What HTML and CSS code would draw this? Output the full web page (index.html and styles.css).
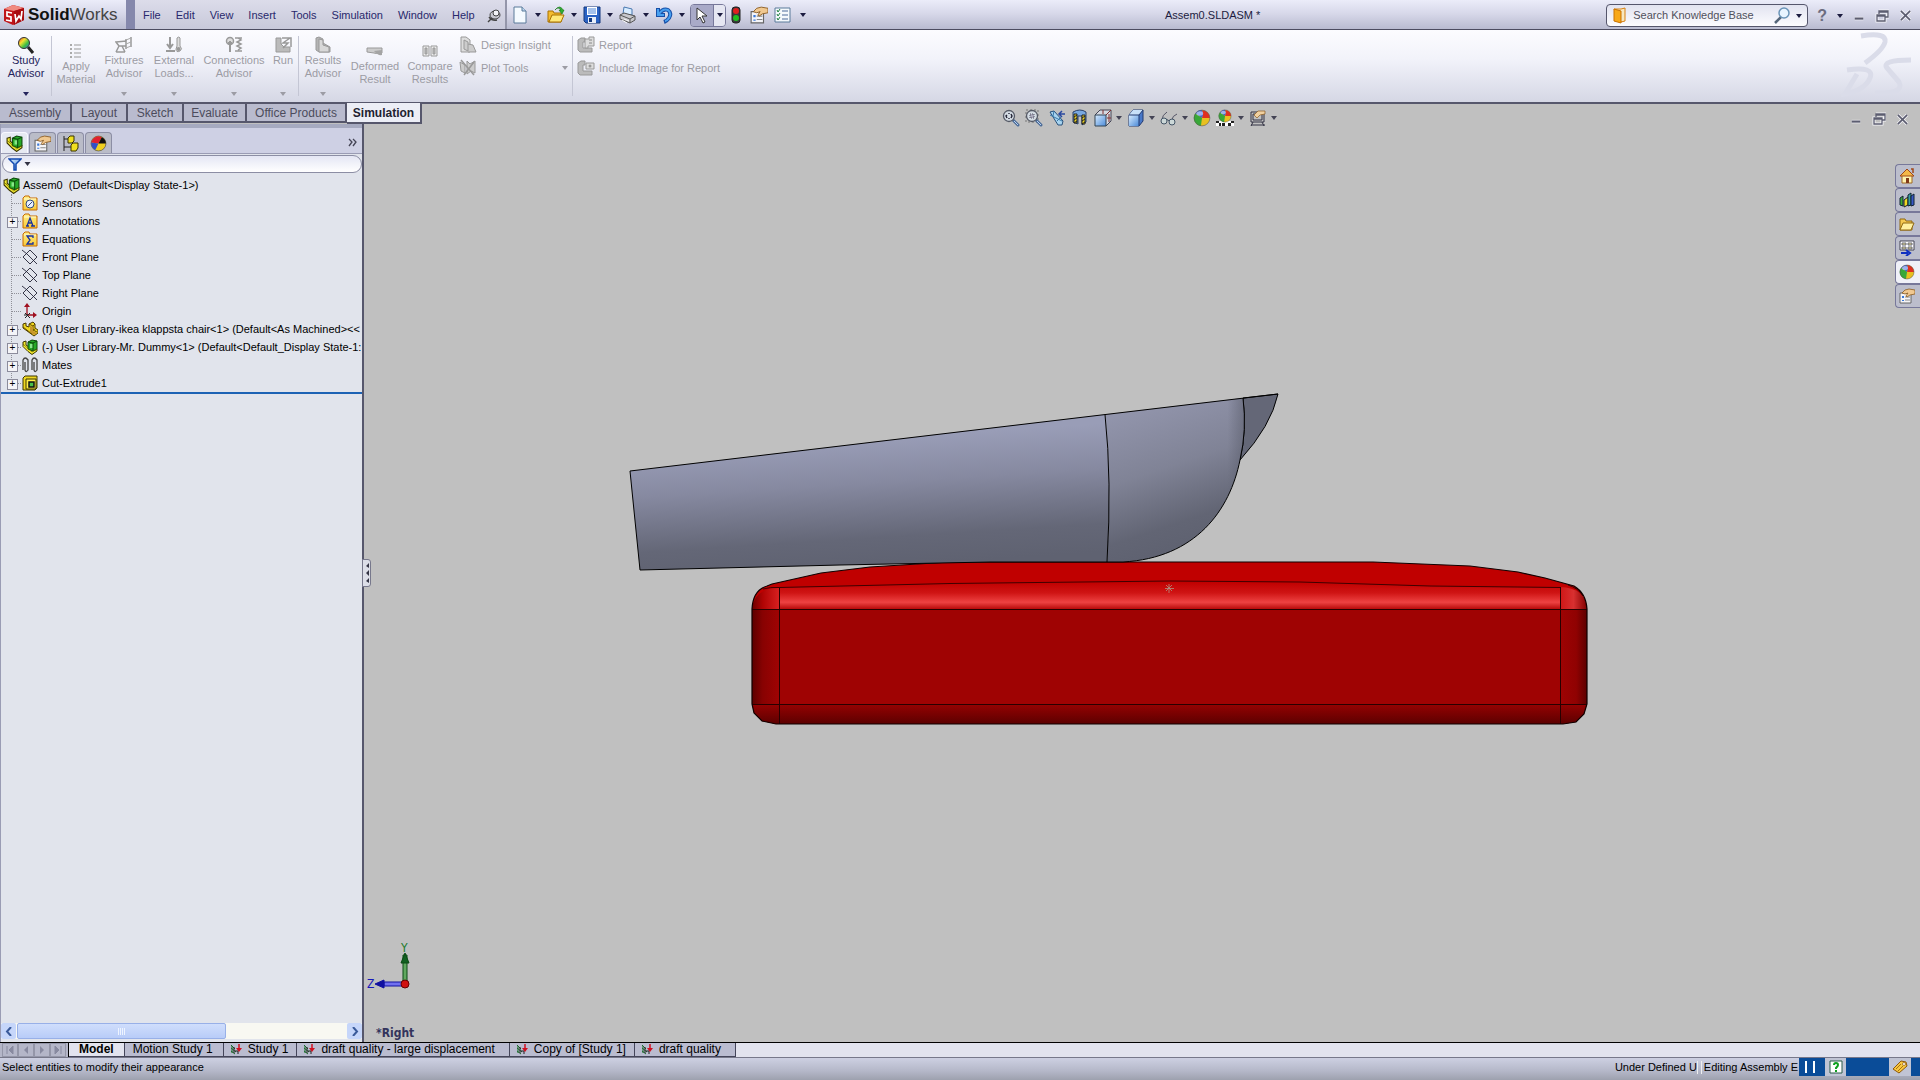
FILE: index.html
```
<!DOCTYPE html>
<html lang="en">
<head>
<meta charset="utf-8">
<title>Assem0.SLDASM - SolidWorks</title>
<link rel="stylesheet" href="styles.css">
</head>
<body>
<svg class="defs" aria-hidden="true">
  <defs>
    <linearGradient id="gRainbow" x1="0" y1="0" x2="1" y2="1"><stop offset="0" stop-color="#e03020"/><stop offset=".35" stop-color="#f8e030"/><stop offset=".65" stop-color="#40c040"/><stop offset="1" stop-color="#3060e0"/></linearGradient>
    <linearGradient id="gBlue" x1="0" y1="0" x2="1" y2="1"><stop offset="0" stop-color="#d8ecff"/><stop offset="1" stop-color="#4a8ad8"/></linearGradient>
    <linearGradient id="gFolder" x1="0" y1="0" x2="0" y2="1"><stop offset="0" stop-color="#fff08a"/><stop offset="1" stop-color="#f8c838"/></linearGradient>
    <symbol id="i-assembly" viewBox="0 0 16 16">
      <path d="M1 3l3-1v4l3 2 8 2v2l-5 3.500-4-3-5-5z" fill="#f4ec30" stroke="#3a3400"/>
      <path d="M6 3l4-2 5 1v8l-4 2-5-2z" fill="#28a828" stroke="#0a4a0a"/>
      <path d="M8 5h3v4H8z" fill="#88e888"/>
      <path d="M6 3l5 1v8M11 4l4-2" stroke="#0a4a0a" fill="none"/>
      <path d="M1 5l9 8 5-3" fill="none" stroke="#6a6000" stroke-width=".7"/>
    </symbol>
    <symbol id="i-part" viewBox="0 0 16 16">
      <path d="M1 3l3-1v3l3 1V3l4-2 2 2v4l3 2v3l-4 3-11-8z" fill="#f0d820" stroke="#4a3a00"/>
      <path d="M7 3l4 2v4l4 2M11 5l2-2M11 9l2-1M1 6l9 7" stroke="#6a5000" fill="none"/>
      <path d="M8 5l3 1v4l4 2-3 2-4-3z" fill="#c8962a"/>
    </symbol>
    <symbol id="i-folder" viewBox="0 0 16 16"><path d="M1 3l2-2h4l1 2h7v12H1z" fill="url(#gFolder)" stroke="#c86a00"/><path d="M2 4h12" stroke="#fffad0"/></symbol>
    <symbol id="i-plane" viewBox="0 0 16 16"><path d="M8 1l7 7-7 7-7-7zM0 1l5 4M5 5l6 6M11 11l4 4" fill="none" stroke="#222236" stroke-width=".9"/></symbol>
    <symbol id="i-prop" viewBox="0 0 16 16"><path d="M1 5h11v10H1z" fill="#f4f4f8" stroke="#666"/><path d="M3 8h2v2H3zM3 12h2v1H3z" fill="#3878d8"/><path d="M6 9h5M6 12h5" stroke="#888"/><path d="M3 5l3-3 4-1 6 1v4l-5 1-3 2-1-1 2-3-3 1z" fill="#f0c890" stroke="#8a5a20" stroke-width=".8"/></symbol>
    <symbol id="i-sphere" viewBox="0 0 16 16"><circle cx="8" cy="8" r="7" fill="#e8c020"/><path d="M8 8L2 4a7 7 0 0 1 6-3q2 3 0 7z" fill="#3c64d8"/><path d="M8 8q2-4 0-7a7 7 0 0 1 7 7z" fill="#e03020"/><path d="M8 8L2 4a7 7 0 0 0 5 11z" fill="#38a838"/><ellipse cx="6" cy="4" rx="3" ry="2" fill="#fff" opacity=".5"/><circle cx="8" cy="8" r="7" fill="none" stroke="#555" stroke-width=".5"/></symbol>
    <symbol id="i-study" viewBox="0 0 12 12"><path d="M1 2l4 4M1 5l5 4M1 8l4 3M2 3v7" stroke="#1a6a2a" fill="none"/><path d="M4 4v6M5 8h3v3" stroke="#222" fill="none"/><path d="M9 1v6" stroke="#d01020" stroke-width="1.500"/><path d="M6 5h6l-3 4z" fill="#d01020"/></symbol>
    <symbol id="i-min" viewBox="0 0 14 14"><path d="M2 10h10" stroke="#f4f4f8" stroke-width="4"/><path d="M2 10h10" stroke="#5c5d70" stroke-width="2.500"/></symbol>
    <symbol id="i-restore" viewBox="0 0 14 14"><path d="M4 2h9v6h-3M2 6h8v6H2z" fill="none" stroke="#f4f4f8" stroke-width="3"/><path d="M4 5V2h9v6h-3M4 3h9M2 6h8v6H2zM2 7h8" fill="none" stroke="#5c5d70" stroke-width="1.300"/></symbol>
    <symbol id="i-close" viewBox="0 0 14 14"><path d="M2 2l10 10M12 2L2 12" stroke="#f4f4f8" stroke-width="3.500"/><path d="M2 2l10 10M12 2L2 12" stroke="#5c5d70" stroke-width="1.800"/></symbol>
    <symbol id="i-down" viewBox="0 0 6 4"><path d="M0 0h6L3 4z" fill="currentColor"/></symbol>
    <symbol id="i-zoom" viewBox="0 0 18 18"><path d="M11 11l5 5" stroke="#4c6c98" stroke-width="3" stroke-linecap="round"/><path d="M12 12l4 4" stroke="#b8d0f0"/><circle cx="7" cy="7" r="5.500" fill="#d4dce4" stroke="#555a66" stroke-width="1.300"/></symbol>
  </defs>
</svg>

<header class="titlebar">
  <div class="brand">
    <svg width="22" height="22" viewBox="0 0 22 22" aria-hidden="true"><path d="M1 5l9-4 11 3v12l-11 5L1 17z" fill="#c01418"/><path d="M1 5l9-4 11 3-10 3z" fill="#f08a80"/><path d="M11 7l10-3v12l-10 5z" fill="#a80c10"/><path d="M9 9L4 8v4l4 1v4l-5-1M12 10l1 7 3-5 2 3 1-8" fill="none" stroke="#fff" stroke-width="1.700"/></svg>
    <span><b>Solid</b>Works</span>
  </div>
  <nav class="menu" aria-label="Main menu">
    <button>File</button><button>Edit</button><button>View</button><button>Insert</button><button>Tools</button><button>Simulation</button><button>Window</button><button>Help</button>
    <button class="pin" aria-label="Pin menu"><svg width="14" height="14" viewBox="0 0 14 14"><path d="M1 13l4-4" stroke="#444" stroke-width="1.500"/><ellipse cx="8" cy="6" rx="5" ry="4" fill="#c8c8d0" stroke="#444"/><circle cx="9" cy="4" r="3" fill="#f4f4f8" stroke="#444"/><path d="M2 8q3 4 8 3" fill="none" stroke="#444" stroke-width="1.500"/></svg></button>
  </nav>
  <div class="quick">
    <button class="qb" aria-label="New"><svg width="16" height="18" viewBox="0 0 16 18"><path d="M2 1h8l4 4v12H2z" fill="#f4faff" stroke="#5a7a9a"/><path d="M10 1v4h4" fill="#c0d8f0" stroke="#5a7a9a"/></svg></button>
    <button class="qa" aria-label="New options"><svg width="6" height="4"><use href="#i-down"/></svg></button>
    <button class="qb" aria-label="Open"><svg width="18" height="18" viewBox="0 0 18 18"><path d="M1 16V5h5l1 2h7v9z" fill="#f4bc30" stroke="#a87000"/><path d="M2 16l3-7h12l-3 7z" fill="#ffe878" stroke="#a87000"/><path d="M8 4q3-4 6 0h-2l3 4 2-4h-1q-3-6-8 0z" fill="#30b030" stroke="#107010" stroke-width=".6"/></svg></button>
    <button class="qa" aria-label="Open options"><svg width="6" height="4"><use href="#i-down"/></svg></button>
    <button class="qb" aria-label="Save"><svg width="18" height="18" viewBox="0 0 18 18"><path d="M1 1h16v16H3l-2-2z" fill="#2a62c4" stroke="#14387c"/><path d="M4 1h10v8H4z" fill="#fff"/><path d="M5 3h8M5 5h8M5 7h8" stroke="#4a84d8"/><path d="M5 11h8v6H5z" fill="#e8eef8"/><path d="M6 12h3v4H6z" fill="#14387c"/></svg></button>
    <button class="qa" aria-label="Save options"><svg width="6" height="4"><use href="#i-down"/></svg></button>
    <button class="qb" aria-label="Print"><svg width="18" height="18" viewBox="0 0 18 18"><path d="M4 8l1-7 8 2v6z" fill="#d8ecff" stroke="#4878b0"/><path d="M1 9l4-2 11 3v4l-5 3-10-4z" fill="#c8c8cc" stroke="#555"/><path d="M1 9l10 4 5-3M11 13v4" fill="none" stroke="#555"/><path d="M5 13l5 2M3 14l5 3" stroke="#f8f8f8"/></svg></button>
    <button class="qa" aria-label="Print options"><svg width="6" height="4"><use href="#i-down"/></svg></button>
    <button class="qb" aria-label="Undo"><svg width="18" height="18" viewBox="0 0 18 18"><path d="M3 2v7h7M4 8q4-6 9-4 4 3 1 8-2 3-5 4" fill="none" stroke="#1850a8" stroke-width="4"/><path d="M3 3v6h6M4 8q4-6 9-4 4 3 1 8-2 3-4 3" fill="none" stroke="#48a0f0" stroke-width="2"/></svg></button>
    <button class="qa" aria-label="Undo options"><svg width="6" height="4"><use href="#i-down"/></svg></button>
    <div class="selectbox">
      <button class="cursor" aria-label="Select"><svg width="12" height="17" viewBox="0 0 12 17"><path d="M1 1v12l3-3 3 6 2-1-3-6h5z" fill="#fff" stroke="#333"/></svg></button>
      <button class="selarrow" aria-label="Select options"><svg width="6" height="4"><use href="#i-down"/></svg></button>
    </div>
    <button class="qc" aria-label="Rebuild"><svg width="10" height="18" viewBox="0 0 10 18"><rect x="1" y="1" width="8" height="16" rx="3" fill="#3a3a3a" stroke="#222"/><circle cx="5" cy="5" r="3" fill="#e02020"/><circle cx="5" cy="12" r="3" fill="#20c020"/></svg></button>
    <button class="qc" aria-label="Options"><svg width="18" height="18"><use href="#i-prop"/></svg></button>
    <button class="qc" aria-label="Customize"><svg width="17" height="16" viewBox="0 0 17 16"><path d="M1 1h15v14H1z" fill="#f4f8fc" stroke="#5a7a9a"/><path d="M3 3l1 2 2-3M3 7l1 2 2-3M3 11l1 2 2-3" fill="none" stroke="#208040"/><path d="M8 4h6M8 8h6M8 12h6" stroke="#4a6a9a"/></svg></button>
    <button class="qa" aria-label="More"><svg width="6" height="4"><use href="#i-down"/></svg></button>
  </div>
  <h1 class="doc">Assem0.SLDASM *</h1>
  <form class="search">
    <svg width="14" height="17" viewBox="0 0 14 17" aria-hidden="true"><path d="M1 2h7l4-1v13l-4 1z" fill="#f8e8c0" stroke="#d88010"/><path d="M1 2l7 2v12l-7-2z" fill="#f8a818" stroke="#c87000"/></svg>
    <input type="text" aria-label="Search Knowledge Base" value="Search Knowledge Base">
    <button type="button" aria-label="Search"><svg width="17" height="17" viewBox="0 0 17 17"><path d="M1 16l6-6" stroke="#55667a" stroke-width="2.500"/><circle cx="10" cy="6" r="5" fill="#e8f4ff" stroke="#6a94b8" stroke-width="1.500"/></svg></button>
    <button type="button" aria-label="Search scope"><svg width="6" height="4"><use href="#i-down"/></svg></button>
  </form>
  <div class="winctl">
    <button class="help" aria-label="Help">?</button>
    <button aria-label="Help options"><svg width="6" height="4"><use href="#i-down"/></svg></button>
    <button aria-label="Minimize"><svg width="12" height="12"><use href="#i-min"/></svg></button>
    <button aria-label="Restore"><svg width="14" height="14"><use href="#i-restore"/></svg></button>
    <button aria-label="Close"><svg width="13" height="13"><use href="#i-close"/></svg></button>
  </div>
</header>

<section class="ribbon" aria-label="Simulation commands">
  <button class="cmd w50 on"><svg width="18" height="18" viewBox="0 0 18 18"><path d="M11 11l5 6" stroke="#222" stroke-width="3"/><circle cx="7" cy="7" r="5.500" fill="url(#gRainbow)" stroke="#333"/></svg><span>Study<br>Advisor</span><svg class="arr" width="6" height="4"><use href="#i-down"/></svg></button>
  <i class="sep"></i>
  <button class="cmd w48 low" disabled><svg width="18" height="18" viewBox="0 0 18 18"><path d="M3 2h2v2H3zM3 6h2v2H3zM3 10h2v2H3zM3 14h2v2H3z" fill="#aaa"/><path d="M7 3h7M7 7h7M7 11h7M7 15h7" stroke="#999"/></svg><span>Apply<br>Material</span></button>
  <button class="cmd w48" disabled><svg width="18" height="18" viewBox="0 0 18 18"><path d="M1 6l10-1v5H4zM4 10l-3 6M7 10l3 6M1 16h9M11 3v10M16 1v10" fill="none" stroke="#999" stroke-width="1.500"/><path d="M11 4l5-2M11 8l5-2M11 12l5-2" stroke="#aaa"/></svg><span>Fixtures<br>Advisor</span><svg class="arr" width="6" height="4"><use href="#i-down"/></svg></button>
  <button class="cmd w52" disabled><svg width="18" height="18" viewBox="0 0 18 18"><path d="M5 1v10M1 15h9M2 8l3 4 3-4" fill="none" stroke="#999" stroke-width="2"/><path d="M12 2q2-2 3 0v8q3 3 0 5-4 2-4-2l1-3z" fill="#ddd" stroke="#999"/><circle cx="13.500" cy="13" r="2" fill="#999"/></svg><span>External<br>Loads...</span><svg class="arr" width="6" height="4"><use href="#i-down"/></svg></button>
  <button class="cmd w68" disabled><svg width="18" height="18" viewBox="0 0 18 18"><circle cx="5" cy="5" r="3.500" fill="#ddd" stroke="#999" stroke-width="1.500"/><path d="M5 5v11M3 7h4" stroke="#999" stroke-width="2"/><path d="M10 2h7M10 15h7M13 2l3 2-4 2 4 2-4 2 4 2-3 2" fill="none" stroke="#999" stroke-width="1.500"/></svg><span>Connections<br>Advisor</span><svg class="arr" width="6" height="4"><use href="#i-down"/></svg></button>
  <button class="cmd w30" disabled><svg width="18" height="18" viewBox="0 0 18 18"><path d="M2 2h5v6l3 3h6v5H2z" fill="#bbb" stroke="#999"/><path d="M8 2h9v9M16 2l-7 5h5l-5 5" fill="none" stroke="#999" stroke-width="1.500"/></svg><span>Run</span><svg class="arr" width="6" height="4"><use href="#i-down"/></svg></button>
  <i class="sep"></i>
  <button class="cmd w48" disabled><svg width="18" height="18" viewBox="0 0 18 18"><path d="M2 2l3-1 4 2v4l7 4v5H5l-3-2z" fill="#b4b4b4" stroke="#999"/><path d="M5 3l4 1v5l6 2v5H5z" fill="#d8d8d8" stroke="#999"/></svg><span>Results<br>Advisor</span><svg class="arr" width="6" height="4"><use href="#i-down"/></svg></button>
  <button class="cmd w56 low" disabled><svg width="18" height="18" viewBox="0 0 18 18"><path d="M1 6h15v5q-7 1-8 0l-7-1z" fill="#ccc" stroke="#999"/><path d="M8 9q4 5 8 4V8z" fill="#a4a4a4"/></svg><span>Deformed<br>Result</span></button>
  <button class="cmd w54 low" disabled><svg width="18" height="18" viewBox="0 0 18 18"><path d="M2 4h6v10H2zM10 4h6v10h-6z" fill="#eee" stroke="#999"/><path d="M4 6h2v6H4zM12 6h2v6h-2z" fill="#bbb" stroke="#999"/></svg><span>Compare<br>Results</span></button>
  <div class="stack tools">
    <button class="row" disabled><svg width="18" height="18" viewBox="0 0 18 18"><path d="M2 1h5l4 3v12H2z" fill="#ddd" stroke="#999"/><path d="M5 4v9l4 2V6zM9 8l5 1 3 7H9" fill="#ccc" stroke="#999"/></svg><span>Design Insight</span></button>
    <button class="row" disabled><svg width="18" height="18" viewBox="0 0 18 18"><path d="M1 3l5 3v8l-4-2zM8 2l3 3 5-3v12l-4-2-4 3z" fill="#ccc" stroke="#999"/><path d="M2 1l13 15M15 3L5 16" stroke="#999" stroke-width="1.500"/></svg><span>Plot Tools</span><svg class="end" width="6" height="4"><use href="#i-down"/></svg></button>
  </div>
  <i class="sep"></i>
  <div class="stack">
    <button class="row" disabled><svg width="18" height="18" viewBox="0 0 18 18"><path d="M1 4l3-2h4v4H6v6h9v4H3l-2-2z" fill="#bbb" stroke="#999"/><path d="M8 3h4V1h5v9h-6v2H8z" fill="#ddd" stroke="#999"/><path d="M12 4h3M12 7h3" stroke="#888"/></svg><span>Report</span></button>
    <button class="row" disabled><svg width="18" height="18" viewBox="0 0 18 18"><path d="M1 4l3-2h4v4H6v6h9v4H3l-2-2z" fill="#bbb" stroke="#999"/><path d="M9 4h8v6H9z" fill="#ddd" stroke="#999"/><circle cx="13" cy="7" r="1.500" fill="#999"/></svg><span>Include Image for Report</span></button>
  </div>
  <svg class="watermark" width="76" height="72" viewBox="0 0 76 72" aria-hidden="true"><g fill="none" stroke="#dadce9" stroke-width="5"><path d="M20 6Q46 2 44 12 42 20 24 33"/><path d="M6 40Q34 36 29 48 24 60 4 64L16 44"/><path d="M70 30Q40 30 46 38L58 52Q64 64 34 63"/></g></svg>
</section>

<main>
  <nav class="cmdtabs" aria-label="Command tabs">
    <button class="t71">Assembly</button><button class="t56">Layout</button><button class="t56">Sketch</button><button class="t63">Evaluate</button><button class="t100">Office Products</button><button class="t75 active">Simulation</button>
  </nav>

  <aside class="panel">
    <div class="ptabs">
      <button class="active" aria-label="Feature tree"><svg width="17" height="17"><use href="#i-assembly"/></svg></button>
      <button aria-label="Properties"><svg width="17" height="17"><use href="#i-prop"/></svg></button>
      <button aria-label="Configurations"><svg width="17" height="17" viewBox="0 0 17 17"><path d="M2 1v15M2 4h5M2 12h7" stroke="#222" fill="none"/><path d="M6 3l2-2h4v5l-2 2H6zM9 10l2-2h5v5l-2 3H9z" fill="#f0e020" stroke="#3a3400"/></svg></button>
      <button aria-label="Appearances"><svg width="17" height="17" viewBox="0 0 16 16"><circle cx="8" cy="8" r="7" fill="#f0d020" stroke="#444" stroke-width=".6"/><path d="M8 8L1 7a7 7 0 0 1 10-5z" fill="#e02030"/><path d="M8 8l3-6a7 7 0 0 1 4 6z" fill="#111"/><path d="M8 8L1 7q0 5 4 7z" fill="#3050c8"/></svg></button>
      <button class="more" aria-label="Show display pane"><svg width="10" height="9" viewBox="0 0 10 9"><path d="M1 1l3 3-3 4M5 1l3 3-3 4" fill="none" stroke="#445" stroke-width="1.300"/></svg></button>
    </div>
    <div class="filter">
      <svg width="14" height="13" viewBox="0 0 14 13" aria-hidden="true"><path d="M1 1h12L8 6v6H6V6z" fill="url(#gBlue)" stroke="#1048b0" stroke-width="1.500"/></svg>
      <svg class="fa" width="7" height="4" aria-hidden="true"><use href="#i-down"/></svg>
      <input type="text" aria-label="Filter">
    </div>
    <div class="root"><svg width="17" height="17"><use href="#i-assembly"/></svg><span>Assem0&nbsp; (Default&lt;Display State-1&gt;)</span></div>
    <ul class="tree">
      <li><svg width="16" height="16" viewBox="0 0 16 16"><use href="#i-folder"/><circle cx="8" cy="9" r="4" fill="#e8f0ff" stroke="#334a7a"/><path d="M6 11l4-4" stroke="#334a7a"/></svg><span>Sensors</span></li>
      <li class="ex"><svg width="16" height="16" viewBox="0 0 16 16"><use href="#i-folder"/><path d="M4 13h3M9 13h4M5 13l3-8 3 8M6 10h4" fill="none" stroke="#1830a0" stroke-width="1.300"/></svg><span>Annotations</span></li>
      <li><svg width="16" height="16" viewBox="0 0 16 16"><use href="#i-folder"/><path d="M11 7V5H5l3 4-3 4h6v-2" fill="none" stroke="#1830a0" stroke-width="1.300"/></svg><span>Equations</span></li>
      <li><svg width="16" height="16"><use href="#i-plane"/></svg><span>Front Plane</span></li>
      <li><svg width="16" height="16"><use href="#i-plane"/></svg><span>Top Plane</span></li>
      <li><svg width="16" height="16"><use href="#i-plane"/></svg><span>Right Plane</span></li>
      <li><svg width="16" height="16" viewBox="0 0 16 16"><path d="M5 12V2M5 12h8" stroke="#a01020" stroke-width="1.300"/><path d="M2 4l3-4 3 4zM11 9l4 3-4 3z" fill="#a01020"/><path d="M3 10l5 5M8 10l-5 5M2 12h4" stroke="#222"/></svg><span>Origin</span></li>
      <li class="ex"><svg width="16" height="16"><use href="#i-part"/></svg><span>(f) User Library-ikea klappsta chair&lt;1&gt; (Default&lt;As Machined&gt;&lt;&lt;</span></li>
      <li class="ex"><svg width="16" height="16"><use href="#i-assembly"/></svg><span>(-) User Library-Mr. Dummy&lt;1&gt; (Default&lt;Default_Display State-1:</span></li>
      <li class="ex"><svg width="16" height="16" viewBox="0 0 16 16"><path d="M1 13V3q2-4 5 0v10q-2 3-3 0V5M10 13V3q2-4 5 0v10q-2 3-3 0V5" fill="none" stroke="#444" stroke-width="1.300"/></svg><span>Mates</span></li>
      <li class="ex"><svg width="16" height="16" viewBox="0 0 16 16"><path d="M1 3l2-2h12v12l-2 2H1z" fill="#f0d820" stroke="#3a3400"/><path d="M4 4h10v10H4z" fill="#fff048" stroke="#3a3400"/><path d="M7 7h5v5H7z" fill="#48c048" stroke="#111" stroke-width="1.500"/></svg><span>Cut-Extrude1</span></li>
    </ul>
    <div class="hscroll">
      <button aria-label="Scroll left"><svg width="8" height="9" viewBox="0 0 8 9"><path d="M6 0L2 4.500 6 9" fill="none" stroke="#3a5a9a" stroke-width="2"/></svg></button>
      <div class="track"><div class="thumb"><i></i><i></i><i></i><i></i></div></div>
      <button aria-label="Scroll right"><svg width="8" height="9" viewBox="0 0 8 9"><path d="M2 0l4 4.500L2 9" fill="none" stroke="#3a5a9a" stroke-width="2"/></svg></button>
    </div>
    <button class="splitter" aria-label="Collapse panel"><svg width="6" height="22" viewBox="0 0 6 22"><path d="M5 1v5L2 4zM5 8v6l-3-3zM5 16v5l-3-2z" fill="#334"/></svg></button>
  </aside>

  <section class="viewport" aria-label="Graphics area">
    <svg class="scene" viewBox="364 104 1556 938" role="img" aria-label="Seat cushion with leg model">
      <defs>
        <linearGradient id="leg" gradientUnits="userSpaceOnUse" x1="840" y1="440" x2="848" y2="568"><stop offset="0" stop-color="#999db7"/><stop offset=".35" stop-color="#8689a0"/><stop offset=".78" stop-color="#646777"/><stop offset="1" stop-color="#5f6271"/></linearGradient>
        <linearGradient id="knee" gradientUnits="userSpaceOnUse" x1="1150" y1="405" x2="1195" y2="540"><stop offset="0" stop-color="#9194ab"/><stop offset=".45" stop-color="#808396"/><stop offset=".85" stop-color="#626574"/><stop offset="1" stop-color="#5f6271"/></linearGradient>
        <linearGradient id="kneeEdge" x1="0" y1="0" x2="1" y2="0"><stop offset=".88" stop-color="#5c5f6e" stop-opacity="0"/><stop offset="1" stop-color="#5c5f6e" stop-opacity=".6"/></linearGradient>
        <linearGradient id="fillet" gradientUnits="userSpaceOnUse" x1="0" y1="582" x2="0" y2="609"><stop offset="0" stop-color="#c00000"/><stop offset=".4" stop-color="#cf1414"/><stop offset=".75" stop-color="#ee4242"/><stop offset="1" stop-color="#b80a0a"/></linearGradient>
        <linearGradient id="under" gradientUnits="userSpaceOnUse" x1="0" y1="704" x2="0" y2="724"><stop offset="0" stop-color="#960202"/><stop offset="1" stop-color="#5c0000"/></linearGradient>
        <linearGradient id="cornerL" x1="0" y1="0" x2="1" y2="0"><stop offset="0" stop-color="#6c0000"/><stop offset=".4" stop-color="#b00404"/><stop offset="1" stop-color="#d82020"/></linearGradient>
        <linearGradient id="cornerR" x1="0" y1="0" x2="1" y2="0"><stop offset="0" stop-color="#d01616"/><stop offset=".5" stop-color="#d83030"/><stop offset="1" stop-color="#800000"/></linearGradient>
        <linearGradient id="sideL" x1="0" y1="0" x2="1" y2="0"><stop offset="0" stop-color="#5c0000"/><stop offset=".4" stop-color="#880202"/><stop offset="1" stop-color="#9f0303"/></linearGradient>
        <linearGradient id="sideR" x1="0" y1="0" x2="1" y2="0"><stop offset="0" stop-color="#9f0303"/><stop offset=".6" stop-color="#900202"/><stop offset="1" stop-color="#5c0000"/></linearGradient>
      </defs>
      <path d="M752 609Q753 590 767 586L772 584 821 573 870 567 950 562 1373 562 1470 566 1518 572 1545 578 1574 586Q1586 593 1587 609V704L1584 714 1576 722 1563 724H776L762 721 754 713 752 704Z" fill="#c00000"/>
      <path d="M779 587.500L950 583.500 1170 581 1300 582 1430 586 1560 587.500V609H779z" fill="url(#fillet)"/>
      <path d="M752 609Q754 589 779 587V609z" fill="url(#cornerL)"/>
      <path d="M1560 609V587Q1586 588 1587 609z" fill="url(#cornerR)"/>
      <path d="M779 609H1560V704H779z" fill="#9f0303"/>
      <path d="M752 609H779V704H752z" fill="url(#sideL)"/>
      <path d="M1560 609H1587V704H1560z" fill="url(#sideR)"/>
      <path d="M752 704H1587L1584 714 1576 722 1563 724H776L762 721 754 713z" fill="url(#under)"/>
      <path d="M752 609.500H1587M752 704.500H1587M779.500 587V724M1560.500 587V724" stroke="#280000"/>
      <path d="M763 589Q770 587 779 587.500L950 583.500 1170 581 1300 582 1430 586 1560 587.500M1568 585q10 3 15 11" fill="none" stroke="#400000"/>
      <path d="M752 609Q753 590 767 586L772 584 821 573 870 567 950 562 1373 562 1470 566 1518 572 1545 578 1574 586Q1586 593 1587 609V704L1584 714 1576 722 1563 724H776L762 721 754 713 752 704Z" fill="none" stroke="#100000" stroke-width="1.200"/>
      <path d="M1243 398L1278 394Q1271 426 1240 460Q1247 430 1243 398Z" fill="#646777" stroke="#000"/>
      <path d="M630 471L1105 414.500Q1112 480 1107 562H990L840 565 640 570Z" fill="url(#leg)"/>
      <path d="M1105 414.500L1243 398Q1247 430 1240 460C1230 510 1196 558 1123 562H1107Q1112 480 1105 414.500Z" fill="url(#knee)"/>
      <path d="M1105 414.500L1243 398Q1247 430 1240 460C1230 510 1196 558 1123 562H1107Q1112 480 1105 414.500Z" fill="url(#kneeEdge)"/>
      <path d="M630 471L1278 394M1243 398Q1247 430 1240 460C1230 510 1196 558 1123 562H990L840 565 640 570 630 471M1105 414.500Q1112 480 1107 562" fill="none" stroke="#000"/>
      <path d="M1169 584v9M1165 588.500h9M1166 585l6 6M1172 585l-6 6" stroke="#b09080" stroke-width=".8"/>
      <path d="M403 984V955h4v29z" fill="#60a860" stroke="#0a4a14"/><path d="M401 963l4-10 4 10z" fill="#106020" stroke="#0a4a14"/>
      <path d="M405 982H384v4h21z" fill="#7070f0" stroke="#1010a0"/><path d="M384 980l-9 4 9 4z" fill="#1010a0" stroke="#1010a0"/>
      <circle cx="405" cy="984" r="4" fill="#d01010" stroke="#600"/>
      <text x="401" y="952" class="axisy">Y</text>
      <text x="367" y="988" class="axisz">Z</text>
      <text x="376" y="1037" class="viewname">*Right</text>
    </svg>
    <div class="hud">
      <button aria-label="Zoom to fit"><svg width="18" height="18"><use href="#i-zoom"/><path d="M5 6l-1 1 1 2M9 5l1 2-1 2M7 4v1M7 9v1" stroke="#223" fill="none" stroke-width="1.400"/></svg></button>
      <button aria-label="Zoom to area"><svg width="18" height="18"><path d="M1 1h12v12H1z" fill="none" stroke="#777" stroke-dasharray="2 2"/><use href="#i-zoom"/><path d="M5 5h4v4H5z" fill="#aab" stroke="#556" stroke-dasharray="1 1"/></svg></button>
      <button aria-label="Previous view"><svg width="18" height="18" viewBox="0 0 18 18"><path d="M2 3l4-1 9 10-1 4-4 0z" fill="#a8d4f0" stroke="#28507a"/><path d="M2 6l12 6M6 2l-1 5M9 12l4-4" stroke="#3878a8" fill="none"/><path d="M17 5h-5M14 2l-3 3 3 3" stroke="#2848a0" fill="none" stroke-width="1.500"/></svg></button>
      <button aria-label="Section view"><svg width="18" height="18" viewBox="0 0 18 18"><path d="M2 3q7-4 13 0v10l-4 3V7H7v8l-5-2z" fill="#78a8e0" stroke="#28406a"/><path d="M3 5h3v9H3zM11 6h3v9h-3z" fill="#f0d820" stroke="#222"/><path d="M3 8l3-2M3 11l3-2M3 14l3-2M11 9l3-2M11 12l3-2M11 15l3-2" stroke="#222"/></svg></button>
      <button aria-label="View orientation"><svg width="18" height="18" viewBox="0 0 18 18"><path d="M1 6l5-5h11v11l-5 5" fill="#d4d8e0" stroke="#445"/><path d="M1 6h11v11H1z" fill="url(#gBlue)" stroke="#345"/><path d="M12 6l5-5M9 1v4M13 9h4M15 5v8" stroke="#803030" fill="none"/></svg></button><button class="ha" aria-label="Orientation options"><svg width="6" height="4"><use href="#i-down"/></svg></button>
      <button aria-label="Display style"><svg width="18" height="18" viewBox="0 0 18 18"><path d="M2 6l4-5h10v11l-4 5H2z" fill="#4878c8" stroke="#233a70"/><path d="M2 6h10v11H2z" fill="url(#gBlue)"/><path d="M2 6l4-5h10l-4 5z" fill="#c8e0f8"/><path d="M2 6h10v11M12 6l4-5" fill="none" stroke="#233a70"/></svg></button><button class="ha" aria-label="Display options"><svg width="6" height="4"><use href="#i-down"/></svg></button>
      <button aria-label="Hide or show items"><svg width="18" height="18" viewBox="0 0 18 18"><path d="M2 11q0-5 5-8M12 11q0-4 5-6" fill="none" stroke="#556"/><circle cx="4" cy="12" r="3" fill="#ccd8d8" stroke="#456"/><circle cx="12" cy="13" r="3" fill="#ccd8d8" stroke="#456"/><path d="M7 11q1-1 2 1" fill="none" stroke="#456"/></svg></button><button class="ha" aria-label="Hide options"><svg width="6" height="4"><use href="#i-down"/></svg></button>
      <button aria-label="Edit appearance"><svg width="18" height="18"><use href="#i-sphere"/></svg></button>
      <button aria-label="Apply scene"><svg width="18" height="18" viewBox="0 0 18 18"><path d="M0 12h18v5H0z" fill="#fff"/><path d="M0 12h3v2H0zM6 14h3v3H6zM3 14h2v3H3zM12 14h3v3h-3zM15 12h3v2h-3z" fill="#222"/><svg x="2" y="0" width="14" height="14"><use href="#i-sphere"/></svg></svg></button><button class="ha" aria-label="Scene options"><svg width="6" height="4"><use href="#i-down"/></svg></button>
      <button aria-label="View settings"><svg width="18" height="18" viewBox="0 0 18 18"><path d="M2 3h13v10H2zM4 5h9v6H4zM4 13l-2 4M13 13l2 4M2 16h14" fill="none" stroke="#334"/><path d="M5 6l4-4h7v3l-5 1-3 3z" fill="#f0d0a0" stroke="#8a5a20" stroke-width=".7"/></svg></button><button class="ha" aria-label="View options"><svg width="6" height="4"><use href="#i-down"/></svg></button>
    </div>
    <div class="docctl">
      <button aria-label="Minimize document"><svg width="12" height="12"><use href="#i-min"/></svg></button>
      <button aria-label="Restore document"><svg width="14" height="14"><use href="#i-restore"/></svg></button>
      <button aria-label="Close document"><svg width="13" height="13"><use href="#i-close"/></svg></button>
    </div>
    <div class="taskpane">
      <button aria-label="Resources"><svg width="16" height="16" viewBox="0 0 16 16"><path d="M3 8v7h10V8" fill="#fff4b0" stroke="#a06820"/><path d="M1 8l7-7 7 7z" fill="#f4b848" stroke="#a04818"/><path d="M7 10h3v5H7z" fill="#803818"/><path d="M12 1h2v4" fill="none" stroke="#a04818" stroke-width="1.500"/></svg></button>
      <button aria-label="Design library"><svg width="16" height="16" viewBox="0 0 16 16"><path d="M1 6l3-2v10l-3-1z" fill="#38a838" stroke="#123"/><path d="M5 8l4-3v8l-4 2z" fill="#f0d820" stroke="#123"/><path d="M9 3l3-2v12l-3 1z" fill="#38a0a0" stroke="#123"/><path d="M12 4l3-2v11l-3 1z" fill="#3858c8" stroke="#123"/></svg></button>
      <button aria-label="File explorer"><svg width="16" height="16" viewBox="0 0 16 16"><path d="M1 14V3h5l1 2h6v9z" fill="#f4c850" stroke="#906810"/><path d="M1 14l3-7h11l-3 7z" fill="#fff0a0" stroke="#906810"/></svg></button>
      <button aria-label="View palette"><svg width="16" height="16" viewBox="0 0 16 16"><path d="M1 1h14v9H1z" fill="#fff" stroke="#445"/><path d="M3 3h4v2H3zM9 3h4v2H9zM3 7h4v2H3zM9 7h4v2H9z" fill="#e8e090" stroke="#667"/><path d="M2 13h7M7 10l4 3-4 3" fill="none" stroke="#1030c0" stroke-width="2"/></svg></button>
      <button class="active" aria-label="Appearances"><svg width="16" height="16"><use href="#i-sphere"/></svg></button>
      <button aria-label="Custom properties"><svg width="16" height="16"><use href="#i-prop"/></svg></button>
    </div>
  </section>
</main>

<nav class="sheets" aria-label="Studies">
  <div class="nav">
    <button aria-label="First" disabled><svg width="10" height="10" viewBox="0 0 10 10"><path d="M2 1v8M8 1L4 5l4 4z" fill="#888aa0" stroke="#888aa0"/></svg></button>
    <button aria-label="Previous" disabled><svg width="10" height="10" viewBox="0 0 10 10"><path d="M7 1L3 5l4 4z" fill="#888aa0"/></svg></button>
    <button aria-label="Next" disabled><svg width="10" height="10" viewBox="0 0 10 10"><path d="M3 1l4 4-4 4z" fill="#888aa0"/></svg></button>
    <button aria-label="Last" disabled><svg width="10" height="10" viewBox="0 0 10 10"><path d="M8 1v8M2 1l4 4-4 4z" fill="#888aa0" stroke="#888aa0"/></svg></button>
  </div>
  <button class="sheet active">Model</button>
  <button class="sheet">Motion Study 1</button>
  <button class="sheet st"><svg width="12" height="12"><use href="#i-study"/></svg>Study 1</button>
  <button class="sheet st wide"><svg width="12" height="12"><use href="#i-study"/></svg>draft quality - large displacement</button>
  <button class="sheet st"><svg width="12" height="12"><use href="#i-study"/></svg>Copy of [Study 1]</button>
  <button class="sheet st wide"><svg width="12" height="12"><use href="#i-study"/></svg>draft quality</button>
</nav>

<footer class="status">
  <span class="msg">Select entities to modify their appearance</span>
  <span class="cell c1">Under Defined U</span>
  <span class="cell c2">Editing Assembly E</span>
  <div class="tray">
    <i></i><i></i>
    <button class="q" aria-label="Quick tips"><svg width="14" height="14" viewBox="0 0 14 14"><path d="M1 1h12v12H1z" fill="#fff" stroke="#2a5a4a"/><path d="M5 5q0-2 2-2t2 2q0 1-2 3v1M7 10v2" fill="none" stroke="#10a020" stroke-width="2"/></svg></button>
    <button class="tag" aria-label="Tags"><svg width="16" height="14" viewBox="0 0 16 14"><path d="M1 9l8-8 5 1 1 4-8 7z" fill="#f8c840" stroke="#905808"/><path d="M4 9l5-5M6 11l5-5" stroke="#a87010"/><circle cx="12" cy="4" r="1.500" fill="#fff" stroke="#905808" stroke-width=".7"/></svg></button>
  </div>
</footer>
</body>
</html>
```
FILE: styles.css
```
* { box-sizing: border-box; }

body {
  margin: 0;
  height: 100vh;
  display: flex;
  flex-direction: column;
  overflow: hidden;
  font: 11px/13px "Liberation Sans", Arial, sans-serif;
  color: #000;
  background: #c0c0c0;
}

button {
  margin: 0;
  padding: 0;
  border: 0;
  background: none;
  font: inherit;
  color: inherit;
  display: flex;
  align-items: center;
  justify-content: center;
  flex: none;
}

svg { display: block; flex: none; }
.defs { position: absolute; width: 0; height: 0; }

/* Title bar */
.titlebar {
  height: 30px;
  flex: none;
  display: flex;
  align-items: stretch;
  color: #1c1c40;
  background: linear-gradient(#ebecf9, #d8d9ea 45%, #b9bbd0);
  border-bottom: 1px solid #4c4c60;
}
.brand {
  width: 135px;
  padding-left: 3px;
  display: flex;
  align-items: center;
  gap: 3px;
  font-size: 17px;
  line-height: 20px;
  color: #444;
  border-right: 9px solid #8588ac;
}
.brand b { color: #111; }
.menu {
  width: 372px;
  padding: 2px 0 0 8px;
  display: flex;
  gap: 15px;
  color: #28286c;
  background: linear-gradient(#dcdcea, #c8c9da);
  border-right: 2px solid #9496aa;
}
.pin { margin-left: -3px; }
.quick {
  display: flex;
  align-items: center;
  padding: 1px 0 0 3px;
}
.qb { width: 20px; }
.qa { width: 16px; }
.selectbox {
  width: 36px;
  height: 23px;
  display: flex;
  border: 1px solid #77789a;
  border-radius: 4px;
  overflow: hidden;
}
.cursor { width: 22px; background: #a9aac8; }
.selarrow { width: 12px; background: #e6e7f2; border-left: 1px solid #77789a; }
.qc { width: 20px; margin-right: 3px; }
.doc {
  flex: 1;
  margin: 0;
  padding: 2px 0 0 354px;
  align-self: center;
  font-size: 11px;
  line-height: 13px;
  font-weight: 400;
  white-space: nowrap;
}
.search {
  width: 202px;
  height: 23px;
  align-self: center;
  margin-top: 2px;
  display: flex;
  align-items: center;
  padding: 0 2px 0 6px;
  border: 1px solid #55566c;
  border-radius: 4px;
  background: linear-gradient(#e2e3f0, #fcfcff);
}
.search input {
  flex: 1;
  min-width: 0;
  border: 0;
  padding: 0 6px;
  font: inherit;
  color: #50505c;
  background: none;
}
.search button + button { width: 12px; margin-left: 2px; }
.winctl {
  display: flex;
  align-items: center;
  gap: 10px;
  padding: 2px 8px 0 9px;
}
.help { font-size: 16px; line-height: 18px; font-weight: 700; color: #6c6d80; }

/* Ribbon */
.ribbon {
  height: 74px;
  flex: none;
  display: flex;
  position: relative;
  padding: 6px 0 0 1px;
  background: linear-gradient(#fcfcff, #f2f3fa 40%, #d5d7e5);
  border-bottom: 2px solid #56576c;
}
.cmd {
  height: 64px;
  flex-direction: column;
  justify-content: flex-start;
  color: #9c9ca4;
}
.cmd span { white-space: nowrap; }
.cmd .arr { margin-top: auto; margin-bottom: 4px; }
.cmd.low { padding-top: 6px; }
.cmd.on { color: #25255c; }
.w30 { width: 30px; }
.w48 { width: 48px; }
.w50 { width: 50px; }
.w52 { width: 52px; }
.w54 { width: 54px; }
.w56 { width: 56px; }
.w68 { width: 68px; }
.sep { width: 1px; height: 60px; background: #c4c6d4; }
.stack { display: flex; flex-direction: column; gap: 5px; padding-left: 4px; }
.stack.tools { width: 115px; padding-left: 2px; }
.row { height: 18px; justify-content: flex-start; gap: 4px; color: #9c9ca4; }
.row .end { margin-left: auto; margin-right: 4px; }
.watermark { position: absolute; right: 3px; top: 0; }

/* Work area */
main {
  flex: 1;
  min-height: 0;
  display: grid;
  grid-template-columns: 364px minmax(0, 1fr);
  grid-template-rows: 20px minmax(0, 1fr);
}
.cmdtabs {
  grid-area: 1 / 1;
  z-index: 2;
  display: flex;
  font-size: 12px;
  line-height: 14px;
  color: #4c4c5c;
}
.cmdtabs button {
  height: 19px;
  background: #b9bbce;
  border-right: 2px solid #56576c;
  border-bottom: 2px solid #56576c;
  white-space: nowrap;
}
.cmdtabs .active {
  height: 21px;
  margin-top: -1px;
  color: #222230;
  font-weight: 700;
  background: #eceef6;
}
.t56 { width: 56px; }
.t63 { width: 63px; }
.t71 { width: 72px; }
.t75 { width: 75px; }
.t100 { width: 100px; }

.panel {
  grid-area: 2 / 1;
  position: relative;
  display: flex;
  flex-direction: column;
  min-height: 0;
  background: #e1e4ec;
  border-left: 1px solid #9a9cb4;
  border-right: 2px solid #56576c;
}
.ptabs {
  height: 30px;
  flex: none;
  display: flex;
  align-items: flex-end;
  gap: 1px;
  padding: 0 3px 0 0;
  background: #ced0e4;
  border-top: 4px solid #a6aac0;
  border-bottom: 1px solid #9a9cb4;
}
.ptabs button {
  width: 27px;
  height: 21px;
  background: #babcc8;
  border: 1px solid #8c8ea4;
  border-bottom: 0;
  border-radius: 4px 4px 0 0;
}
.ptabs .active { background: #e6e9f2; border-color: #f8f8ff; }
.ptabs .more { width: 12px; margin-left: auto; background: none; border: 0; }
.filter {
  height: 18px;
  margin: 1px 0 2px 1px;
  flex: none;
  display: flex;
  align-items: center;
  padding-left: 5px;
  color: #334;
  border: 1px solid #8c8ea4;
  border-radius: 9px;
  background: linear-gradient(#e4e6f4, #fff);
}
.filter .fa { margin-left: 2px; }
.filter input { flex: 1; min-width: 0; height: 14px; border: 0; background: none; }
.root { height: 18px; flex: none; margin: 1px 0 0 2px; display: flex; align-items: center; gap: 3px; }
.tree {
  list-style: none;
  margin: 0 0 0 10px;
  padding: 0;
  position: relative;
}
.tree::before {
  content: "";
  position: absolute;
  left: 0;
  top: 0;
  bottom: 10px;
  border-left: 1px dotted #909098;
}
.tree::after {
  content: "";
  position: absolute;
  left: -10px;
  right: 0;
  bottom: -2px;
  height: 2px;
  background: #1c62b4;
}
.tree li {
  height: 18px;
  padding-left: 11px;
  position: relative;
  display: flex;
  align-items: center;
  gap: 4px;
  white-space: nowrap;
}
.tree li::before {
  content: "";
  position: absolute;
  left: 1px;
  top: 9px;
  width: 9px;
  border-top: 1px dotted #909098;
}
.tree .ex::after {
  content: "+";
  position: absolute;
  left: -4px;
  top: 5px;
  width: 9px;
  height: 9px;
  font-size: 10px;
  line-height: 7px;
  text-align: center;
  background: #f4f4f8;
  border: 1px solid #8c8c9c;
}
.hscroll {
  height: 16px;
  margin-top: auto;
  margin-bottom: 3px;
  flex: none;
  display: flex;
  background: #f8f8f2;
}
.hscroll button { width: 15px; background: #c6d6fa; border-radius: 2px; }
.track { flex: 1; display: flex; }
.thumb {
  width: 63%;
  margin-left: 1px;
  display: flex;
  gap: 1px;
  align-items: center;
  justify-content: center;
  background: linear-gradient(#d0defc, #b8ccf8);
  border: 1px solid #98b0e8;
  border-radius: 2px;
}
.thumb i { width: 1px; height: 7px; background: #eef4ff; }
.splitter {
  position: absolute;
  right: -9px;
  top: 435px;
  z-index: 2;
  width: 9px;
  height: 28px;
  background: #dcdee8;
  border: 1px solid #77788c;
  border-radius: 0 3px 3px 0;
}

/* Graphics area */
.viewport {
  grid-area: 1 / 2 / 3 / 3;
  position: relative;
  overflow: hidden;
  background: #c0c0c0;
}
.scene { width: 100%; height: 100%; }
.axisy { font: 12px "DejaVu Sans Condensed", "DejaVu Sans", sans-serif; fill: #1a7a2a; }
.axisz { font: 12px "DejaVu Sans Condensed", "DejaVu Sans", sans-serif; fill: #1818b8; }
.viewname { font: bold 12px "DejaVu Sans Condensed", "DejaVu Sans", sans-serif; fill: #34345c; }
.hud {
  position: absolute;
  top: 5px;
  left: 0;
  right: 6px;
  display: flex;
  justify-content: center;
  gap: 5px;
  color: #445;
}
.ha { width: 6px; margin-left: -1px; }
.docctl {
  position: absolute;
  top: 8px;
  right: 11px;
  display: flex;
  align-items: center;
  gap: 10px;
}
.taskpane {
  position: absolute;
  top: 60px;
  right: 0;
  display: flex;
  flex-direction: column;
}
.taskpane button {
  width: 25px;
  height: 24px;
  padding-right: 2px;
  background: #bcbecc;
  border: 1px solid #77789a;
  border-right: 0;
  border-radius: 4px 0 0 4px;
}
.taskpane .active { background: #f0f1f8; }

/* Study tabs */
.sheets {
  height: 16px;
  flex: none;
  display: flex;
  font-size: 12px;
  line-height: 14px;
  background: #e2e3ee;
  border-top: 1px solid #000;
  border-bottom: 1px solid #77788a;
}
.nav { display: flex; padding-left: 2px; width: 69px; background: #b4b6c8; border-right: 1px solid #000; }
.nav button { width: 16px; border: 1px solid #9496a8; }
.sheet {
  padding: 0 10px 1px 8px;
  background: #babcd0;
  border-right: 1px solid #44455a;
  border-bottom: 1px solid #44455a;
  white-space: nowrap;
}
.sheet.active { padding: 0 10px 1px; font-weight: 700; background: #e2e3ee; }
.sheet.st { gap: 6px; padding: 0 8px 1px 6px; }
.sheet.wide { padding-right: 14px; }

/* Status bar */
.status {
  height: 22px;
  flex: none;
  display: flex;
  align-items: center;
  padding-bottom: 3px;
  background: linear-gradient(#cdd0e2, #b4b7c8 60%, #9da1ae);
  white-space: nowrap;
}
.msg { flex: 1; padding-left: 2px; }
.cell { flex: none; }
.c1 { margin-right: 3px; border-right: 1px solid #eee; }
.c2 { padding: 0 1px 0 2px; border-left: 1px solid #eee; }
.tray { width: 121px; height: 18px; align-self: flex-start; display: flex; align-items: center; background: #0a4c98; }
.tray i { width: 2px; height: 12px; margin-left: 6px; background: #fff; }
.tray .q { width: 21px; height: 18px; margin-left: 10px; background: #c0c4d4; }
.tray .tag { width: 22px; height: 18px; margin-left: auto; margin-right: 9px; background: #c0c4d4; }
```
